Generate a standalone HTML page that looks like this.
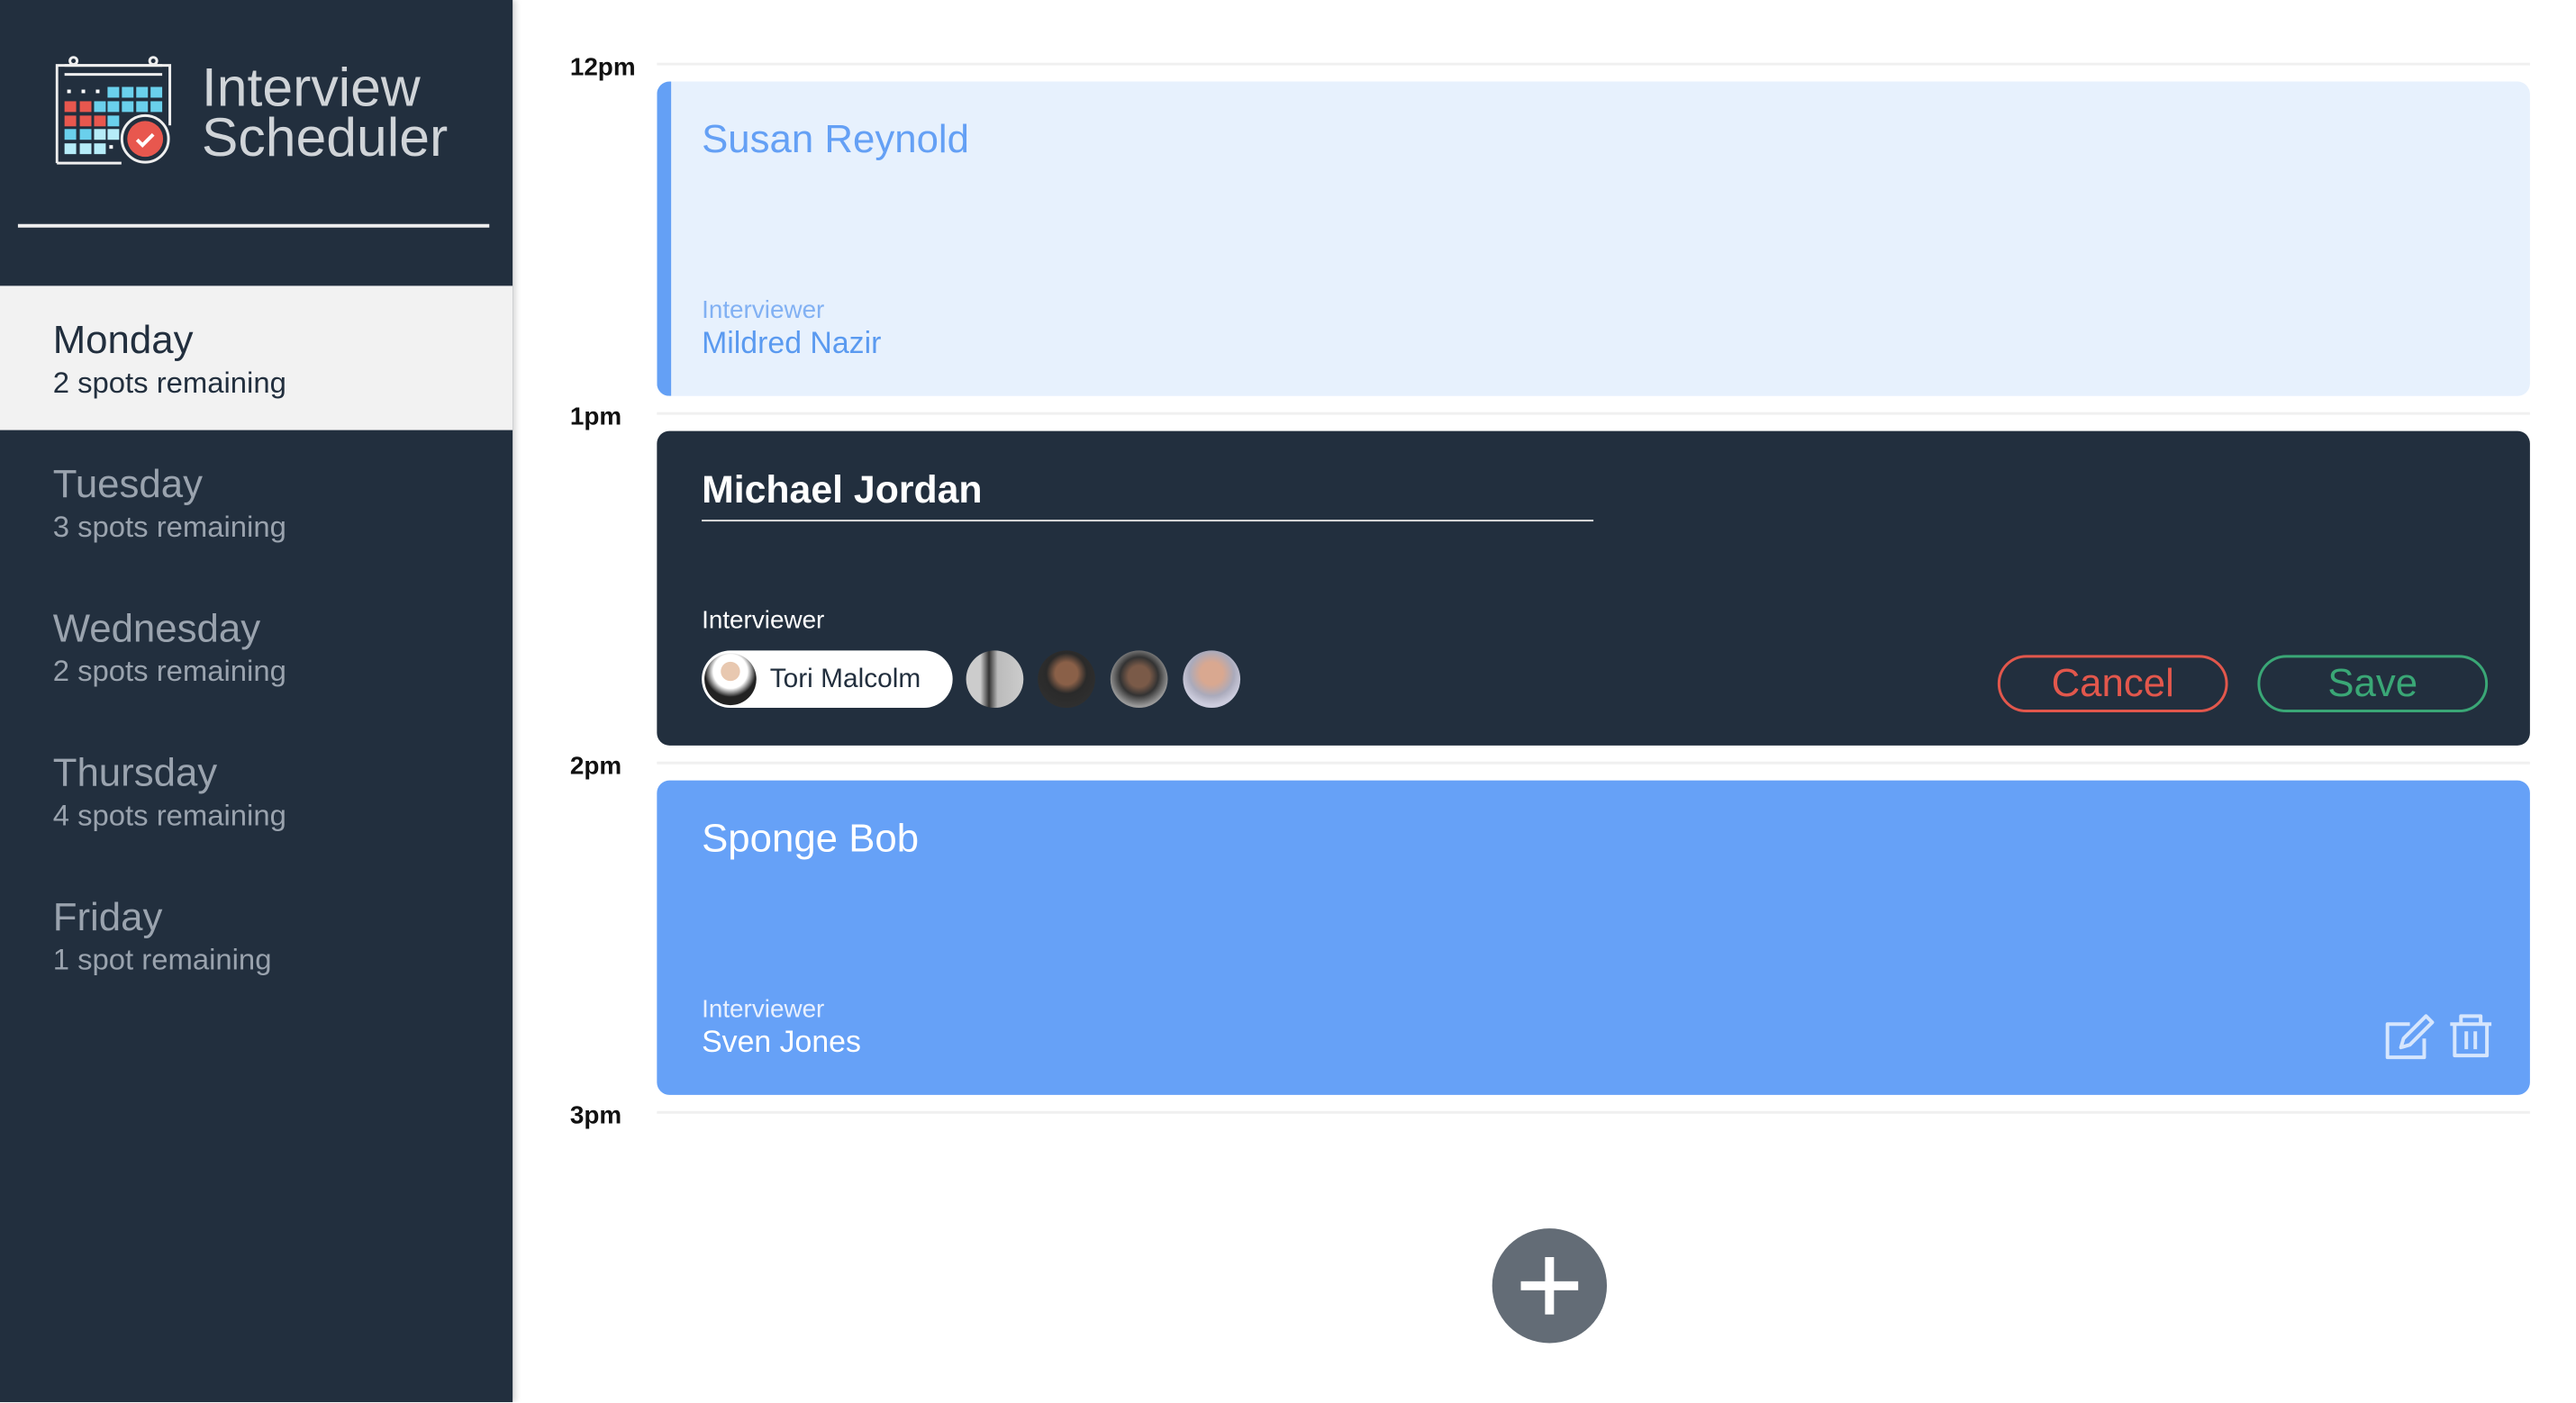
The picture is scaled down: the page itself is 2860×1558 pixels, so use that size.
<!DOCTYPE html>
<html style="overflow:hidden;width:2860px;height:1558px"><head><meta charset="utf-8"><style>
*{margin:0;padding:0;box-sizing:border-box}
body{width:2860px;height:1558px;position:relative;background:#fff;font-family:"Liberation Sans",sans-serif;overflow:hidden}
#w{position:absolute;left:0;top:0;width:2874px;height:1565px;transform:scale(0.995);transform-origin:0 0;overflow:hidden}
.sb{position:absolute;left:0;top:0;width:572px;height:1565px;background:#222f3e;box-shadow:4px 0 6px rgba(0,0,0,.15)}
.t{position:absolute;white-space:nowrap;line-height:1}
.day{position:absolute;left:0;width:572px;height:161px}
.dn{position:absolute;left:59px;top:39px;font-size:44px;color:#9aa3ae}
.ds{position:absolute;left:59px;top:91px;font-size:33px;color:#9aa3ae}
.sel{background:#f2f2f2}
.sel .dn,.sel .ds{color:#222f3e}
.line{position:absolute;left:733px;width:2090px;height:3px;background:#f0f0f0}
.tl{position:absolute;left:636px;font-size:28px;font-weight:bold;color:#111}
.card{position:absolute;left:733px;width:2090px;height:351px;border-radius:14px}
.av{position:absolute;width:64px;height:64px;border-radius:50%}
.btn{position:absolute;top:731px;width:257px;height:64px;border-radius:32px;border:3px solid;font-size:44px;text-align:center;line-height:58px}
</style></head><body><div id="w">
<div class="sb">
<svg style="position:absolute;left:62px;top:62px" width="130" height="122" viewBox="0 0 130 122">
<g fill="none" stroke="#eee" stroke-width="3">
<path d="M1.5 120V11h126v67"/><path d="M1.5 120h72"/><path d="M10 21h109M10 11h109"/>
<circle cx="20" cy="6" r="4"/><circle cx="109" cy="6" r="4"/>
</g>
<g fill="#fff"><rect x="13" y="38" width="4" height="4"/><rect x="29" y="38" width="4" height="4"/><rect x="45" y="38" width="4" height="4"/><rect x="60" y="100" width="4" height="4"/></g>
<g fill="#6ad0ec"><rect x="58" y="35" width="13" height="12"/><rect x="74" y="35" width="13" height="12"/><rect x="90" y="35" width="13" height="12"/><rect x="106" y="35" width="13" height="12"/>
<rect x="43" y="51" width="13" height="12"/><rect x="58" y="51" width="13" height="12"/><rect x="74" y="51" width="13" height="12"/><rect x="90" y="51" width="13" height="12"/><rect x="106" y="51" width="13" height="12"/>
<rect x="58" y="67" width="13" height="12"/><rect x="10" y="82" width="13" height="12"/><rect x="27" y="82" width="13" height="12"/></g>
<g fill="#b6ecf8"><rect x="43" y="82" width="13" height="12"/><rect x="58" y="82" width="13" height="12"/><rect x="10" y="98" width="13" height="12"/><rect x="27" y="98" width="13" height="12"/><rect x="43" y="98" width="13" height="12"/></g>
<g fill="#e8574e"><rect x="10" y="51" width="13" height="12"/><rect x="27" y="51" width="13" height="12"/><rect x="10" y="67" width="13" height="12"/><rect x="27" y="67" width="13" height="12"/><rect x="43" y="67" width="13" height="12"/></g>
<circle cx="100" cy="93" r="26" fill="#222f3e" stroke="#eee" stroke-width="3"/>
<circle cx="100" cy="93" r="20" fill="#e8574e"/>
<path d="M91 94l6 6 12-12" fill="none" stroke="#fff" stroke-width="4"/>
</svg>
<div class="t" style="left:225px;top:67px;font-size:61px;color:#d0d4d8">Interview</div>
<div class="t" style="left:225px;top:123px;font-size:61px;color:#d0d4d8">Scheduler</div>
<div style="position:absolute;left:20px;top:250px;width:526px;height:4px;background:#eee"></div>
<div class="day sel" style="top:319px"><div class="t dn">Monday</div><div class="t ds">2 spots remaining</div></div>
<div class="day" style="top:480px"><div class="t dn">Tuesday</div><div class="t ds">3 spots remaining</div></div>
<div class="day" style="top:641px"><div class="t dn">Wednesday</div><div class="t ds">2 spots remaining</div></div>
<div class="day" style="top:802px"><div class="t dn">Thursday</div><div class="t ds">4 spots remaining</div></div>
<div class="day" style="top:963px"><div class="t dn">Friday</div><div class="t ds">1 spot remaining</div></div>
</div>

<div class="line" style="top:70px"></div><div class="tl t" style="top:61px">12pm</div>
<div class="line" style="top:460px"></div><div class="tl t" style="top:451px">1pm</div>
<div class="line" style="top:850px"></div><div class="tl t" style="top:841px">2pm</div>
<div class="line" style="top:1240px"></div><div class="tl t" style="top:1231px">3pm</div>

<div class="card" style="top:91px;background:#e7f1fd;border-left:16px solid #64a0f5">
<div class="t" style="left:34px;top:43px;font-size:44px;color:#64a0f5">Susan Reynold</div>
<div class="t" style="left:34px;top:241px;font-size:28px;color:#82b1f3">Interviewer</div>
<div class="t" style="left:34px;top:275px;font-size:34px;color:#5a9af0">Mildred Nazir</div>
</div>

<div class="card" style="top:481px;background:#222f3e">
<div class="t" style="left:50px;top:45px;font-size:43px;font-weight:bold;color:#fff">Michael Jordan</div>
<div style="position:absolute;left:50px;top:99px;width:995px;height:2px;background:#ddd"></div>
<div class="t" style="left:50px;top:197px;font-size:28px;color:#fff">Interviewer</div>
<div style="position:absolute;left:50px;top:245px;width:280px;height:64px;border-radius:32px;background:#fff">
<div class="av" style="left:3px;top:3px;width:58px;height:58px;background:radial-gradient(circle at 50% 35%,#e8c8b0 0 22%,#fff 23% 40%,#222 60%)"></div>
<div class="t" style="left:76px;top:17px;font-size:30px;color:#222f3e">Tori Malcolm</div>
</div>
<div class="av" style="left:345px;top:245px;background:linear-gradient(90deg,#ccc 0 25%,#333 40%,#bbb 55%,#ccc)"></div>
<div class="av" style="left:425px;top:245px;background:radial-gradient(circle at 50% 40%,#8a6048 0 25%,#2a2a2a 45%,#333)"></div>
<div class="av" style="left:506px;top:245px;background:radial-gradient(circle at 50% 45%,#7a5a48 0 25%,#333 45%,#999 70%)"></div>
<div class="av" style="left:587px;top:245px;background:radial-gradient(circle at 50% 40%,#d9a890 0 25%,#aab 50%,#ccd 70%)"></div>
</div>
<div class="btn t" style="left:2229px;border-color:#e2574c;color:#e2574c">Cancel</div>
<div class="btn t" style="left:2519px;border-color:#3aa776;color:#3aa776">Save</div>

<div class="card" style="top:871px;background:#66a1f7">
<div class="t" style="left:50px;top:43px;font-size:44px;color:#fff">Sponge Bob</div>
<div class="t" style="left:50px;top:241px;font-size:28px;color:#e8f0fe">Interviewer</div>
<div class="t" style="left:50px;top:275px;font-size:34px;color:#fff">Sven Jones</div>
<svg style="position:absolute;left:1928px;top:258px" width="120" height="56" viewBox="0 0 120 56" fill="none" stroke="#d6e6fd" stroke-width="4" stroke-linejoin="round">
<path d="M28 14H3v37h41V30"/><path d="M18 40l3-10 25-25 7 7-25 25z"/>
<path d="M73 14h46M85 14V5h22v9M78 14v35h36V14M91 22v20M101 22v20"/>
</svg>
</div>

<div style="position:absolute;left:1665px;top:1371px;width:128px;height:128px;border-radius:50%;background:#636c76"></div>
<div style="position:absolute;left:1697px;top:1430px;width:64px;height:10px;background:#fff"></div>
<div style="position:absolute;left:1724px;top:1403px;width:10px;height:64px;background:#fff"></div>
</div></body></html>
